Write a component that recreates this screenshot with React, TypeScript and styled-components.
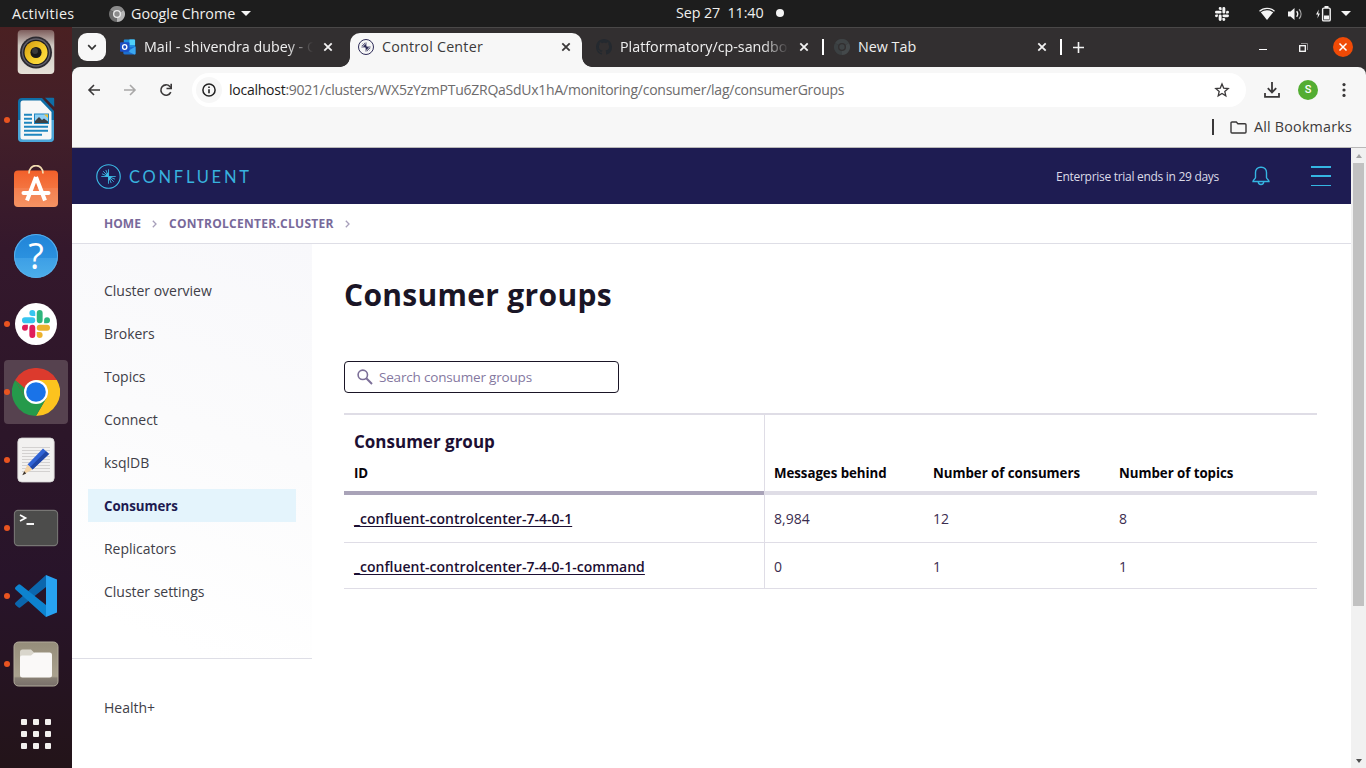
import React from 'react';
import styled, { createGlobalStyle, css } from 'styled-components';

const GlobalStyle = createGlobalStyle`
  * { box-sizing: border-box; }
  html, body { margin: 0; padding: 0; overflow: hidden; }
  body { font-family: "Open Sans", "Noto Sans", sans-serif; font-size: 14px; }
  svg { display: block; flex: none; }
`;

const Desktop = styled.div`
  width: 1366px;
  height: 768px;
  display: flex;
  flex-direction: column;
  overflow: hidden;
  background: #1d1d1d;
`;

/* ---------- GNOME top bar ---------- */

const TopBar = styled.header`
  height: 27px;
  flex: none;
  display: grid;
  grid-template-columns: 1fr auto 1fr;
  align-items: center;
  background: #1d1d1d;
  color: #f0f0ee;
  font-size: 14.3px;
  line-height: 20px;
  white-space: pre;
`;

const TopBarLeft = styled.div`
  display: flex;
  align-items: center;
  padding-left: 12px;
`;

const Activities = styled.span`
  width: 97px;
  letter-spacing: 0.36px;
`;

const AppMenu = styled.div`
  display: flex;
  align-items: center;
  gap: 6px;
`;

const Clock = styled.div`
  display: flex;
  align-items: center;
  gap: 12px;
  padding: 0 0 1px 93px;
  letter-spacing: -0.08px;
  width: 200px;
`;

const NotificationDot = styled.i`
  width: 8px;
  height: 8px;
  flex: none;
  border-radius: 50%;
  background: #f4f4f4;
`;

const Tray = styled.div`
  display: flex;
  justify-content: flex-end;
  align-items: center;
  padding-right: 15px;
`;

const TrayItem = styled.span<{ $w: number }>`
  width: ${p => p.$w}px;
  flex: none;
  display: flex;
  justify-content: center;
`;

const Caret = styled.i`
  border: 5px solid transparent;
  border-top-color: #f4f4f4;
  border-bottom: 0;
`;

/* ---------- Dock ---------- */

const Workspace = styled.div`
  flex: 1;
  min-height: 0;
  display: flex;
`;

const Dock = styled.nav`
  width: 72px;
  flex: none;
  overflow: hidden;
  background: linear-gradient(180deg, #4a2022 0%, #421f29 14%, #34182c 30%, #2c1629 55%, #28142a 75%, #231419 100%);
`;

const DockList = styled.div`
  margin-top: -9px;
  display: flex;
  flex-direction: column;
`;

const DockItem = styled.div<{ $running?: boolean }>`
  height: 68px;
  padding: 2px 4px;
  display: flex;

  &::before {
    content: '';
    width: 6px;
    height: 6px;
    margin-right: -6px;
    align-self: center;
    border-radius: 50%;
    z-index: 1;
    background: ${p => (p.$running ? '#e95420' : 'transparent')};
  }
`;

const DockTile = styled.div<{ $focused?: boolean }>`
  width: 64px;
  height: 64px;
  display: flex;
  align-items: center;
  justify-content: center;
  border-radius: 4px;
  background: ${p => (p.$focused ? '#56424f' : 'transparent')};
`;

const AppGrid = styled.div`
  height: 72px;
  display: grid;
  grid-template-columns: repeat(3, 6px);
  grid-auto-rows: 6px;
  gap: 6px;
  place-content: center;

  i { border-radius: 1px; background: #f2f0ee; }
`;

/* ---------- Browser chrome ---------- */

const Browser = styled.main`
  flex: 1;
  min-width: 0;
  display: flex;
  flex-direction: column;
  background: #322f30;
`;

const TabStrip = styled.div`
  height: 40px;
  flex: none;
  display: flex;
  padding: 5px 0 0 6px;
  border-top: 1px solid #4a4848;
`;

const TabSearch = styled.button`
  width: 28px;
  height: 28px;
  margin-right: 6px;
  padding: 0;
  border: 0;
  border-radius: 9px;
  display: flex;
  align-items: center;
  justify-content: center;
  background: #f7f7f7;
`;

const Tab = styled.div<{ $active?: boolean }>`
  position: relative;
  width: 232px;
  height: 34px;
  margin-right: 6px;
  padding: 0 11px 6px 8px;
  display: flex;
  align-items: center;
  color: ${p => (p.$active ? '#3c3a3b' : '#efefef')};
  font-size: 14.3px;
  ${p => p.$active && css`
    border-radius: 10px 10px 0 0;
    background: #f7f7f7;

    &::before, &::after {
      content: '';
      position: absolute;
      bottom: 0;
      width: 10px;
      height: 10px;
    }
    &::before {
      left: -10px;
      background: radial-gradient(circle at 0 0, transparent 9.5px, #f7f7f7 10.2px);
    }
    &::after {
      right: -10px;
      background: radial-gradient(circle at 100% 0, transparent 9.5px, #f7f7f7 10.2px);
    }
  `}
`;

const TabTitle = styled.span<{ $fade?: boolean; $spacing?: number }>`
  flex: 1;
  min-width: 0;
  margin: 0 10px 0 8px;
  overflow: hidden;
  white-space: nowrap;
  line-height: 20px;
  letter-spacing: ${p => p.$spacing ?? 0}px;
  ${p => p.$fade && css`
    -webkit-mask-image: linear-gradient(90deg, #000 calc(100% - 26px), transparent);
    mask-image: linear-gradient(90deg, #000 calc(100% - 26px), transparent);
  `}
`;

const TabDivider = styled.i<{ $after?: number }>`
  width: 2px;
  height: 16px;
  margin: 6px ${p => p.$after ?? 0}px 0 -4px;
  background: #fff;
`;

const WindowControls = styled.div`
  margin-left: auto;
  height: 28px;
  padding-right: 3px;
  display: flex;
  align-items: center;
`;

const WindowButton = styled.span<{ $w: number }>`
  width: ${p => p.$w}px;
  display: flex;
  justify-content: center;
`;

const NewTabButton = styled.span`
  width: 20px;
  height: 28px;
  display: flex;
  align-items: center;
  justify-content: center;
`;

const Toolbar = styled.div`
  height: 46px;
  flex: none;
  display: flex;
  align-items: center;
  padding-left: 4px;
  border-radius: 8px 8px 0 0;
  background: #f7f7f7;
`;

const ToolButton = styled.span`
  width: 36px;
  display: flex;
  justify-content: center;
`;

const AddressBar = styled.div`
  width: 1054px;
  height: 34px;
  margin: 0 8px;
  padding: 0 16px 0 4px;
  display: flex;
  align-items: center;
  border-radius: 17px;
  background: #fff;
`;

const SiteInfo = styled.span`
  width: 26px;
  height: 26px;
  margin-right: 7px;
  display: flex;
  align-items: center;
  justify-content: center;
  border-radius: 50%;
  background: #f7f7f7;
`;

const Url = styled.span`
  flex: 1;
  color: #6d6b6c;
  font-size: 14px;
  line-height: 20px;
  letter-spacing: -0.25px;
  b { font-weight: 400; color: #1c1b1b; }
`;

const Avatar = styled.span`
  width: 20px;
  height: 20px;
  border-radius: 50%;
  display: flex;
  align-items: center;
  justify-content: center;
  background: #53ad32;
  color: #fff;
  font: 500 11px/20px Roboto, sans-serif;
`;

const BookmarksBar = styled.div`
  height: 35px;
  flex: none;
  padding: 0 14px 6px 0;
  display: flex;
  align-items: center;
  justify-content: flex-end;
  background: #f7f7f7;
  border-bottom: 1px solid #b9b8b8;
  color: #3c3a3b;
  font-size: 14.3px;
  line-height: 20px;
  letter-spacing: 0.21px;
  svg { margin: 0 7px 0 16px; }
`;

const BookmarkDivider = styled.i`
  width: 2px;
  height: 16px;
  background: #3a3839;
`;

/* ---------- Page ---------- */

const Viewport = styled.div`
  flex: 1;
  min-height: 0;
  display: flex;
  background: #fff;
`;

const Page = styled.div`
  flex: 1;
  min-width: 0;
  display: flex;
  flex-direction: column;
`;

const Scrollbar = styled.div`
  width: 15px;
  flex: none;
  display: flex;
  flex-direction: column;
  align-items: center;
  background: #f1f1f1;
`;

const ScrollArrow = styled.span<{ $down?: boolean }>`
  height: 15px;
  display: flex;
  align-items: center;
  margin-top: ${p => (p.$down ? 'auto' : '0')};
  i {
    border: 3.5px solid transparent;
    ${p => (p.$down
      ? 'border-top: 4px solid #505050; border-bottom: 0;'
      : 'border-bottom: 4px solid #a3a3a3; border-top: 0;')}
  }
`;

const ScrollThumb = styled.div`
  width: 11px;
  height: 443px;
  background: #c1c1c1;
`;

const Banner = styled.header`
  height: 56px;
  flex: none;
  padding: 0 20px 0 24px;
  display: flex;
  align-items: center;
  background: #1e1c52;
`;

const Wordmark = styled.span`
  margin: 1px 0 0 8px;
  color: #38b2de;
  font: 400 16.5px/24px Lato, sans-serif;
  letter-spacing: 2.75px;
`;

const TrialNotice = styled.span`
  margin: 0 32px 0 auto;
  color: #dcdbe8;
  font-size: 12px;
  letter-spacing: -0.29px;
`;

const MenuIcon = styled.span`
  width: 20px;
  height: 20px;
  margin-left: 40px;
  display: flex;
  flex-direction: column;
  justify-content: space-between;
  i { height: 1.5px; background: #35b5e2; }
`;

const Breadcrumbs = styled.nav`
  height: 40px;
  flex: none;
  padding: 0 0 1px 32px;
  display: flex;
  align-items: center;
  border-bottom: 1px solid #dedee6;
  color: #78699a;
  font-size: 12px;
  font-weight: 700;
  svg { margin: 1px 12px 0 11px; }
`;

const Crumb = styled.span<{ $spacing: number }>`
  letter-spacing: ${p => p.$spacing}px;
`;

const Body = styled.div`
  flex: 1;
  min-height: 0;
  display: flex;
`;

const Sidebar = styled.aside`
  width: 240px;
  flex: none;
  display: flex;
  flex-direction: column;
`;

const NavGroup = styled.div<{ $main?: boolean }>`
  display: flex;
  flex-direction: column;
  gap: 10px;
  padding: 30px 16px 0;
  ${p => p.$main && css`
    height: 415px;
    border-bottom: 1px solid #dedee6;
    background: linear-gradient(200deg, #f8f8fb 0%, #fbfbfc 45%, #fff 90%);
  `}
  ${p => !p.$main && css`padding-top: 32px;`}
`;

const NavItem = styled.a<{ $active?: boolean }>`
  height: 33px;
  padding-left: 16px;
  line-height: 33px;
  color: #403e48;
  font-size: 14px;
  font-weight: 400;
  letter-spacing: -0.02px;
  ${p => p.$active && css`
    background: #e4f4fc;
    color: #1d1a50;
    font-size: 13.3px;
    font-weight: 700;
    line-height: 34px;
    letter-spacing: -0.07px;
  `}
`;

const Content = styled.section`
  flex: 1;
  min-width: 0;
  padding: 28px 34px 0 32px;
  display: flex;
  flex-direction: column;
`;

const Title = styled.h1`
  margin: 0 0 43px;
  height: 46px;
  color: #1a1526;
  font-size: 30px;
  font-weight: 700;
  line-height: 46px;
  letter-spacing: 0.3px;
`;

const SearchBox = styled.div`
  width: 275px;
  height: 32px;
  margin-bottom: 20px;
  padding: 0 0 1px 12px;
  display: flex;
  align-items: center;
  gap: 6px;
  border: 1px solid #1a1526;
  border-radius: 4px;
  color: #84789f;
  font-size: 13.5px;
  font-weight: 400;
  letter-spacing: -0.18px;
  svg { margin-top: 1px; }
`;

const Table = styled.div`
  display: flex;
  flex-direction: column;
  border-top: 2px solid #dfdde6;
`;

const TableRow = styled.div<{ $h: number }>`
  height: ${p => p.$h}px;
  display: grid;
  grid-template-columns: 420px 159px 186px 1fr;
`;

const HeadCell = styled.div<{ $first?: boolean; $divided?: boolean }>`
  padding: 0 10px 8px;
  display: flex;
  flex-direction: column;
  justify-content: flex-end;
  border-bottom: 4px solid ${p => (p.$first ? '#a9a3b8' : '#dfdde6')};
  box-shadow: ${p => (p.$divided ? 'inset 1px 0 #dfdde6' : 'none')};
  color: #060309;
  font-size: 13.3px;
  font-weight: 700;
  line-height: 20px;
  letter-spacing: -0.05px;
`;

const GroupTitle = styled.strong`
  margin-bottom: 9px;
  color: #1c0f33;
  font-size: 17px;
  font-weight: 700;
  line-height: 24px;
  letter-spacing: 0;
`;

const Cell = styled.div<{ $divided?: boolean }>`
  padding: 1px 10px 0;
  display: flex;
  align-items: center;
  border-bottom: 1px solid #dfdde6;
  box-shadow: ${p => (p.$divided ? 'inset 1px 0 #dfdde6' : 'none')};
  color: #3b2d4f;
  font-size: 14px;
  font-weight: 400;
  letter-spacing: 0;

  ${TableRow}:nth-child(2) > & { padding: 0 10px 1px; }
`;

const GroupLink = styled.a`
  color: #1c0f33;
  font-weight: 600;
  letter-spacing: 0.03px;
  text-decoration: underline;
  text-underline-offset: 2px;
`;

/* ---------- Icons ---------- */

const CloseIcon = ({ color = '#f2f2f2' }: { color?: string }) => (
  <svg width="10" height="10" viewBox="0 0 10 10"><path d="M1.3 1.3 8.7 8.7M8.7 1.3 1.3 8.7" stroke={color} strokeWidth="1.8" /></svg>
);

const ChromeMono = ({ size, a, b, c, hub }: { size: number; a: string; b: string; c: string; hub: string }) => (
  <svg width={size} height={size} viewBox="0 0 48 48">
    <path d="M24 24 3.2 12A24 24 0 0 1 44.8 12z" fill={a} />
    <path d="M24 24 44.8 12A24 24 0 0 1 24 48z" fill={b} />
    <path d="M24 24 24 48A24 24 0 0 1 3.2 12z" fill={c} />
    <circle cx="24" cy="24" r="12" fill={hub} /><circle cx="24" cy="24" r="8" fill={a} />
  </svg>
);

const SlackMark = ({ size, colors }: { size: number; colors: string[] }) => (
  <svg width={size} height={size} viewBox="0 0 122.8 122.8">
    <path fill={colors[0]} d="M25.8 77.6a12.9 12.9 0 1 1-12.9-12.9h12.9zM32.3 77.6a12.9 12.9 0 0 1 25.8 0v32.3a12.9 12.9 0 1 1-25.8 0z" />
    <path fill={colors[1]} d="M45.2 25.8a12.9 12.9 0 1 1 12.9-12.9v12.9zM45.2 32.3a12.9 12.9 0 0 1 0 25.8H12.9a12.9 12.9 0 1 1 0-25.8z" />
    <path fill={colors[2]} d="M97 45.2a12.9 12.9 0 1 1 12.9 12.9H97zM90.5 45.2a12.9 12.9 0 0 1-25.8 0V12.9a12.9 12.9 0 1 1 25.8 0z" />
    <path fill={colors[3]} d="M77.6 97a12.9 12.9 0 1 1-12.9 12.9V97zM77.6 90.5a12.9 12.9 0 0 1 0-25.8h32.3a12.9 12.9 0 1 1 0 25.8z" />
  </svg>
);

const WifiIcon = () => (
  <svg width="16" height="14" viewBox="0 0 16 14">
    <path d="M.5 4.3C4.6.3 11.4.3 15.5 4.3" fill="none" stroke="#f4f4f4" strokeWidth="1.2" />
    <path d="M1.8 5.3C5.4 2.6 10.6 2.6 14.2 5.3L8 13z" fill="#f4f4f4" />
  </svg>
);

const VolumeIcon = () => (
  <svg width="16" height="14" viewBox="0 0 16 14">
    <path d="M1 4.5h2.6L7.5 1v12L3.6 9.5H1z" fill="#f4f4f4" />
    <path d="M9.7 4.2c1.3 1.7 1.3 3.9 0 5.6" fill="none" stroke="#f4f4f4" strokeWidth="1.3" />
    <path d="M12.1 2.2c2.5 2.8 2.5 6.8 0 9.6" fill="none" stroke="#a8a8a8" strokeWidth="1.3" />
  </svg>
);

const BatteryIcon = () => (
  <svg width="16" height="16" viewBox="0 0 16 16">
    <path d="M3.8 3.5 1 8.6h2l-.6 4L5 7.5H3.2z" fill="#f4f4f4" />
    <rect x="7.6" y="2.1" width="7.6" height="12.8" rx="1.2" fill="none" stroke="#f4f4f4" strokeWidth="1.4" />
    <path d="M9.5 0h4v2h-4zM9 9.6h5v4H9z" fill="#f4f4f4" />
  </svg>
);

const OutlookIcon = () => (
  <svg width="16" height="16" viewBox="0 0 17 16">
    <rect x="4" y="0" width="12" height="13" rx="1" fill="#1f8fe0" />
    <path d="M10 0h5a1 1 0 0 1 1 1v5h-6z" fill="#4fd0f8" />
    <path d="M3.500 9 16.500 7.500V15a1 1 0 0 1-1 1H5a1.500 1.500 0 0 1-1.500-1.500z" fill="#1b6fd0" />
    <path d="M8 12.500 16.500 7.500V15a1 1 0 0 1-1 1z" fill="#3ba8f0" />
    <rect x="0" y="3" width="10" height="10" rx="1" fill="#1c4fc4" />
    <ellipse cx="5" cy="8" rx="2.300" ry="2.500" fill="none" stroke="#fff" strokeWidth="1.400" />
  </svg>
);

const ConfluentMark = ({ size, color, stroke }: { size: number; color: string; stroke: number }) => (
  <svg width={size} height={size} viewBox="0 0 26 26" fill="none" stroke={color}>
    <circle cx="13" cy="13" r="12.200" strokeWidth={stroke} />
    <path d="M13 13V5.500M13 13 10.200 6.200M13 13 7.500 7.500M13 13 6.200 10.200M13 13H5.500M13 13v7.500M13 13l2.800 6.800M13 13l5.500 5.500M13 13l6.800 2.800M13 13h7.500" strokeWidth={stroke * 0.75} />
    <path d="M13 13 10.500 10.500 13 8.500zM13 13l2.500 2.500L13 17.500zM13 13h4l-2 2zM13 13H9l2-2z" fill={color} stroke="none" />
  </svg>
);

const GithubIcon = () => (
  <svg width="16" height="16" viewBox="0 0 16 16">
    <path fill="#24292f" d="M8 0C3.580 0 0 3.580 0 8c0 3.540 2.290 6.530 5.470 7.590.4.070.55-.17.55-.38 0-.19-.01-.82-.01-1.490-2.010.37-2.530-.49-2.690-.94-.09-.23-.48-.94-.82-1.130-.28-.15-.68-.52-.01-.53.63-.01 1.080.58 1.230.82.72 1.210 1.870.87 2.330.66.070-.52.28-.87.51-1.070-1.780-.2-3.640-.89-3.640-3.950 0-.87.31-1.590.82-2.150-.08-.2-.36-1.020.08-2.120 0 0 .67-.21 2.200.82.64-.18 1.320-.27 2-.27s1.360.09 2 .27c1.530-1.040 2.200-.82 2.200-.82.44 1.100.16 1.920.08 2.120.51.56.82 1.270.82 2.150 0 3.070-1.870 3.750-3.650 3.950.29.25.54.73.54 1.480 0 1.070-.01 1.930-.01 2.200 0 .21.15.46.55.38A8.010 8.010 0 0 0 16 8c0-4.420-3.580-8-8-8z" />
  </svg>
);

const SpeakerApp = () => (
  <svg width="38" height="46" viewBox="0 0 38 46">
    <defs>
      <linearGradient id="spk" x2="0" y2="1"><stop stopColor="#7d5d5c" /><stop offset=".35" stopColor="#cfc9c2" /><stop offset="1" stopColor="#e6e1d8" /></linearGradient>
      <linearGradient id="cone" x2="1" y2="1"><stop stopColor="#d39a10" /><stop offset=".6" stopColor="#f6cf2d" /><stop offset="1" stopColor="#ffe14d" /></linearGradient>
    </defs>
    <rect x=".7" y="1" width="36.600" height="44" rx="4" fill="url(#spk)" />
    <circle cx="19" cy="23.500" r="16" fill="#2c2a30" /><circle cx="19" cy="23.500" r="14.200" fill="#62606a" />
    <circle cx="19" cy="23.500" r="12.800" fill="#1d1c20" /><circle cx="19" cy="23.500" r="11.500" fill="url(#cone)" />
    <circle cx="19" cy="23.500" r="5.600" fill="#19191a" /><circle cx="18" cy="22" r="3" fill="#3a3a3a" />
  </svg>
);

const WriterApp = () => (
  <svg width="38" height="46" viewBox="0 0 38 46">
    <path d="M5 1h20l12 13v27a4 4 0 0 1-4 4H5a4 4 0 0 1-4-4V5a4 4 0 0 1 4-4z" fill="#0f6ea6" />
    <path d="M1 23h36v18a4 4 0 0 1-4 4H5a4 4 0 0 1-4-4z" fill="#4ba6d8" />
    <path d="M28 .8h8.200a1 1 0 0 1 1 1V10z" fill="#0f6ea6" />
    <path d="M6 3.500h17.500L34.500 15v25a2.500 2.500 0 0 1-2.500 2.500H6A2.500 2.500 0 0 1 3.500 40V6A2.500 2.500 0 0 1 6 3.500z" fill="#f7f7f7" />
    <path d="M7 17.800h8M7 21.800h8M7 25.800h8M7 29.800h24M7 33.800h24M7 37.800h18" stroke="#1f86bf" strokeWidth="1.900" />
    <rect x="17.500" y="17" width="14" height="9.500" fill="#8fd0f4" stroke="#1f86bf" />
    <path d="M18 26v-2l4-4 3 3 2-1.500 4 3V26z" fill="#3c4043" /><path d="m27 17.500 4 0v3.500z" fill="#f0c030" />
  </svg>
);

const SoftwareApp = () => (
  <svg width="46" height="46" viewBox="0 3 46 46">
    <defs><linearGradient id="bag" x2="0" y2="1"><stop stopColor="#f2602a" /><stop offset="1" stopColor="#f58a57" /></linearGradient></defs>
    <rect x="1" y="8.500" width="44" height="36.500" rx="4" fill="url(#bag)" />
    <path d="M1 26h44v15a4 4 0 0 1-4 4H5a4 4 0 0 1-4-4z" fill="#fff" opacity=".08" />
    <path d="M16 11.500c0-10.500 14-10.500 14 0" fill="none" stroke="#f2dcb0" strokeWidth="1.800" />
    <path d="M23 15 14 38.500M23 15l9 23.500" stroke="#fff" strokeWidth="4" fill="none" />
    <path d="M10.500 31h25" stroke="#fff" strokeWidth="4" strokeLinecap="round" />
  </svg>
);

const HelpGlyph = styled.span`
  width: 44px;
  height: 44px;
  border-radius: 50%;
  text-align: center;
  color: #fff;
  background: linear-gradient(180deg, #2084d8, #2b91df 54%, #3d9fe6 55%, #4caeea);
  box-shadow: inset 0 0 0 1px #58aeea;
  font: 400 36px/43px "Open Sans", sans-serif;
`;

const SlackDisc = styled.span`
  width: 42px;
  height: 42px;
  border-radius: 50%;
  display: flex;
  align-items: center;
  justify-content: center;
  background: #fff;
`;

const ChromeApp = () => (
  <svg width="48" height="48" viewBox="0 0 48 48">
    <path d="M24 24 3.200 12A24 24 0 0 1 44.800 12H24z" fill="#dc3a2d" />
    <path d="M24 12H44.800A24 24 0 0 1 24 48L34.400 30z" fill="#fcc31e" />
    <path d="M34.400 30 24 48A24 24 0 0 1 3.200 12L13.600 30z" fill="#259a4b" />
    <path d="M24 12v12L13.600 30 3.200 12z" fill="#dc3a2d" /><path d="M3.200 12 13.600 30H24z" fill="#259a4b" />
    <circle cx="24" cy="24" r="12" fill="#fff" /><circle cx="24" cy="24" r="9.800" fill="#1a73e8" />
  </svg>
);

const EditorApp = () => (
  <svg width="38" height="46" viewBox="0 0 38 46">
    <rect x=".8" y="1" width="36.400" height="44" rx="4" fill="#f2f1f0" stroke="#d2d0d0" strokeWidth=".8" />
    <path d="M5 10.500h28M5 13.500h28M5 16.500h28M5 19.500h28M5 22.500h28M5 25.500h28M5 28.500h28M5 31.500h28M5 34.500h28" stroke="#cfcdcc" strokeWidth=".9" />
    <path d="M26 11.500 10.500 27.500 15.500 32.500 32 17z" fill="#2f62d4" /><path d="m29 14.300-16 16 2.500 2.300L32 17z" fill="#1f46a6" />
    <path d="M10.500 27.500 5.500 38 15.500 32.500z" fill="#f3d3a6" /><path d="M7.300 34.300 5.300 38.300 9.200 36.400z" fill="#3a3430" />
  </svg>
);

const TerminalApp = () => (
  <svg width="46" height="38" viewBox="0 0 46 38">
    <rect x="1.400" y="1.400" width="43.200" height="35.200" rx="3.600" fill="#4c4c4b" stroke="#777674" strokeWidth="1.100" />
    <path d="M7 6l5.500 3L7 12" fill="none" stroke="#fff" strokeWidth="1.700" /><path d="M13.500 15H21" stroke="#fff" strokeWidth="1.900" />
  </svg>
);

const CodeApp = () => (
  <svg width="44" height="44" viewBox="0 0 44 44">
    <path d="M1.500 28.500 32 1v12L6.500 33.200a2 2 0 0 1-2.600-.1L1.600 31a1.700 1.700 0 0 1-.1-2.500z" fill="#0b66ad" />
    <path d="M1.500 15.500 32 43V31L6.500 10.800a2 2 0 0 0-2.600.1L1.600 13a1.700 1.700 0 0 0-.1 2.500z" fill="#0d83cf" />
    <path d="M32 1 43 5.500v33L32 43z" fill="#27a2f1" />
  </svg>
);

const FilesApp = () => (
  <svg width="46" height="46" viewBox="0 0 46 46">
    <defs><linearGradient id="fil" x2="0" y2="1"><stop stopColor="#958d7a" /><stop offset=".78" stopColor="#aaa28f" /><stop offset=".82" stopColor="#877f74" /><stop offset="1" stopColor="#786f6a" /></linearGradient></defs>
    <rect x="1" y="1" width="44" height="44" rx="4.500" fill="url(#fil)" stroke="#b3ac9c" />
    <path d="M7 17v-6a2.500 2.500 0 0 1 2.500-2.500h8.500L21.500 12H36v8z" fill="#d9d6cc" />
    <path d="M7 16.500a2 2 0 0 1 2-2h9l3.500-3H36.500a2.500 2.500 0 0 1 2.500 2.500v20a2.500 2.500 0 0 1-2.500 2.500h-27A2.500 2.500 0 0 1 7 34z" fill="#faf9f8" />
  </svg>
);

const CrumbChevron = () => (
  <svg width="5" height="8" viewBox="0 0 5 8"><path d="M.8.8 4 4 .8 7.200" fill="none" stroke="#a79fba" strokeWidth="1.300" /></svg>
);

/* ---------- Data ---------- */

const dockApps = [
  { icon: <SpeakerApp /> },
  { icon: <WriterApp />, running: true },
  { icon: <SoftwareApp /> },
  { icon: <HelpGlyph>?</HelpGlyph> },
  { icon: <SlackDisc><SlackMark size={28} colors={['#e01e5a', '#36c5f0', '#2eb67d', '#ecb22e']} /></SlackDisc>, running: true },
  { icon: <ChromeApp />, running: true, focused: true },
  { icon: <EditorApp />, running: true },
  { icon: <TerminalApp />, running: true },
  { icon: <CodeApp />, running: true },
  { icon: <FilesApp />, running: true },
];

const navItems = ['Cluster overview', 'Brokers', 'Topics', 'Connect', 'ksqlDB', 'Consumers', 'Replicators', 'Cluster settings'];

const groups = [
  { id: '_confluent-controlcenter-7-4-0-1', behind: '8,984', consumers: '12', topics: '8', height: 48 },
  { id: '_confluent-controlcenter-7-4-0-1-command', behind: '0', consumers: '1', topics: '1', height: 46 },
];

export default function App() {
  return (
    <>
      <GlobalStyle />
      <Desktop>
        <TopBar>
          <TopBarLeft>
            <Activities>Activities</Activities>
            <AppMenu>
              <ChromeMono size={16} a="#8b8b8b" b="#b5b5b5" c="#6d6d6d" hub="#ececec" />
              <span>Google Chrome</span>
              <Caret />
            </AppMenu>
          </TopBarLeft>
          <Clock><span>Sep 27  11:40</span><NotificationDot /></Clock>
          <Tray>
            <TrayItem $w={54}><SlackMark size={14} colors={['#f4f4f4', '#f4f4f4', '#f4f4f4', '#f4f4f4']} /></TrayItem>
            <TrayItem $w={36}><WifiIcon /></TrayItem>
            <TrayItem $w={20}><VolumeIcon /></TrayItem>
            <TrayItem $w={36}><BatteryIcon /></TrayItem>
            <TrayItem $w={10}><Caret /></TrayItem>
          </Tray>
        </TopBar>

        <Workspace>
          <Dock>
            <DockList>
              {dockApps.map((app, i) => (
                <DockItem key={i} $running={app.running}>
                  <DockTile $focused={app.focused}>{app.icon}</DockTile>
                </DockItem>
              ))}
              <AppGrid>{Array.from({ length: 9 }, (_, i) => <i key={i} />)}</AppGrid>
            </DockList>
          </Dock>

          <Browser>
            <TabStrip>
              <TabSearch>
                <svg width="10" height="7" viewBox="0 0 10 7"><path d="M1.200 1.200 5 5l3.800-3.800" fill="none" stroke="#333" strokeWidth="1.700" /></svg>
              </TabSearch>
              <Tab><OutlookIcon /><TabTitle $fade>Mail - shivendra dubey - Outlook</TabTitle><CloseIcon /></Tab>
              <Tab $active>
                <ConfluentMark size={16} color="#2b2955" stroke={1.6} />
                <TabTitle $spacing={0.21}>Control Center</TabTitle>
                <CloseIcon color="#3a3839" />
              </Tab>
              <Tab><GithubIcon /><TabTitle $fade>Platformatory/cp-sandbox</TabTitle><CloseIcon /></Tab>
              <TabDivider $after={2} />
              <Tab><ChromeMono size={16} a="#3f4446" b="#44494b" c="#3b4042" hub="#322f30" /><TabTitle>New Tab</TabTitle><CloseIcon /></Tab>
              <TabDivider $after={6} />
              <NewTabButton>
                <svg width="11" height="11" viewBox="0 0 11 11"><path d="M5.500 0v11M0 5.500h11" stroke="#f4f4f4" strokeWidth="1.600" /></svg>
              </NewTabButton>
              <WindowControls>
                <WindowButton $w={40}><svg width="8" height="8" viewBox="0 0 8 8"><path d="M0 6.500h8" stroke="#fff" /></svg></WindowButton>
                <WindowButton $w={40}>
                  <svg width="9" height="9" viewBox="0 0 9 9"><path d="M2 .5h6.500V7" fill="none" stroke="#8d8b8c" /><rect x=".7" y="2.700" width="5.600" height="5.600" fill="none" stroke="#fff" strokeWidth="1.300" /></svg>
                </WindowButton>
                <WindowButton $w={40}>
                  <svg width="20" height="20" viewBox="0 0 20 20"><circle cx="10" cy="10" r="10" fill="#f04a06" /><path d="m6.500 6.500 7 7M13.500 6.500l-7 7" stroke="#fff" strokeWidth="1.500" /></svg>
                </WindowButton>
              </WindowControls>
            </TabStrip>

            <Toolbar>
              <ToolButton><svg width="14" height="12" viewBox="0 0 14 12"><path d="M13 6H2M7 1 2 6l5 5" fill="none" stroke="#3a3839" strokeWidth="1.600" /></svg></ToolButton>
              <ToolButton><svg width="14" height="12" viewBox="0 0 14 12"><path d="M1 6h11M7 1l5 5-5 5" fill="none" stroke="#a9a8a8" strokeWidth="1.600" /></svg></ToolButton>
              <ToolButton>
                <svg width="14" height="14" viewBox="0 0 14 14"><path d="M11.800 9.200A5.200 5.200 0 1 1 10.900 3.500L12 4.600" fill="none" stroke="#3a3839" strokeWidth="1.600" /><path d="M12.200.8v4.700H7.500" fill="none" stroke="#3a3839" strokeWidth="1.600" /></svg>
              </ToolButton>
              <AddressBar>
                <SiteInfo>
                  <svg width="14" height="14" viewBox="0 0 14 14"><circle cx="7" cy="7" r="6.100" fill="none" stroke="#222" strokeWidth="1.500" /><path d="M7 6.200v4M7 3.500v1.500" stroke="#222" strokeWidth="1.600" /></svg>
                </SiteInfo>
                <Url><b>localhost</b>:9021/clusters/WX5zYzmPTu6ZRQaSdUx1hA/monitoring/consumer/lag/consumerGroups</Url>
                <svg width="16" height="16" viewBox="0 0 16 16"><path d="m8 2 1.700 4.100 4.500.4-3.400 2.900 1 4.400L8 11.500l-3.800 2.300 1-4.400L1.800 6.500l4.500-.4z" fill="none" stroke="#3a3839" strokeWidth="1.300" /></svg>
              </AddressBar>
              <ToolButton>
                <svg width="16" height="16" viewBox="0 0 16 16"><path d="M8 0v10M3.800 6.200 8 10.400l4.200-4.200M1 11v3.900h14V11" fill="none" stroke="#3a3839" strokeWidth="1.800" /></svg>
              </ToolButton>
              <ToolButton><Avatar>S</Avatar></ToolButton>
              <ToolButton>
                <svg width="4" height="14" viewBox="0 0 4 14" fill="#3a3839"><circle cx="2" cy="1.600" r="1.600" /><circle cx="2" cy="7" r="1.600" /><circle cx="2" cy="12.400" r="1.600" /></svg>
              </ToolButton>
            </Toolbar>

            <BookmarksBar>
              <BookmarkDivider />
              <svg width="17" height="13" viewBox="0 0 17 13"><path d="M1 2a1 1 0 0 1 1-1h4.300l1.600 1.700H15a1 1 0 0 1 1 1V11a1 1 0 0 1-1 1H2a1 1 0 0 1-1-1z" fill="none" stroke="#3a3839" strokeWidth="1.400" /></svg>
              <span>All Bookmarks</span>
            </BookmarksBar>

            <Viewport>
              <Page>
                <Banner>
                  <ConfluentMark size={25} color="#3cbbe6" stroke={1.2} />
                  <Wordmark>CONFLUENT</Wordmark>
                  <TrialNotice>Enterprise trial ends in 29 days</TrialNotice>
                  <svg width="20" height="20" viewBox="0 0 20 20" fill="none" stroke="#35b5e2" strokeWidth="1.400">
                    <path d="M4.500 11.500V6.500A5 5 0 0 1 9.500 1.200h1A5 5 0 0 1 15.500 6.500v5c0 1.500 2.500 2 2.500 4H2c0-2 2.500-2.500 2.500-4z" />
                    <path d="M7.300 15.800a2.700 2.700 0 0 0 5.400 0" />
                  </svg>
                  <MenuIcon><i /><i /><i /></MenuIcon>
                </Banner>
                <Breadcrumbs>
                  <Crumb $spacing={0.06}>HOME</Crumb>
                  <CrumbChevron />
                  <Crumb $spacing={0.27}>CONTROLCENTER.CLUSTER</Crumb>
                  <CrumbChevron />
                </Breadcrumbs>
                <Body>
                  <Sidebar>
                    <NavGroup $main>
                      {navItems.map(item => <NavItem key={item} $active={item === 'Consumers'}>{item}</NavItem>)}
                    </NavGroup>
                    <NavGroup><NavItem>Health+</NavItem></NavGroup>
                  </Sidebar>
                  <Content>
                    <Title>Consumer groups</Title>
                    <SearchBox>
                      <svg width="16" height="16" viewBox="0 0 16 16" fill="none" stroke="#7c6f98"><circle cx="5.800" cy="5.800" r="4.700" strokeWidth="1.600" /><path d="m9.300 9.300 5.700 5.700" strokeWidth="2" /></svg>
                      <span>Search consumer groups</span>
                    </SearchBox>
                    <Table>
                      <TableRow $h={80}>
                        <HeadCell $first><GroupTitle>Consumer group</GroupTitle>ID</HeadCell>
                        <HeadCell $divided>Messages behind</HeadCell>
                        <HeadCell>Number of consumers</HeadCell>
                        <HeadCell>Number of topics</HeadCell>
                      </TableRow>
                      {groups.map(g => (
                        <TableRow key={g.id} $h={g.height}>
                          <Cell><GroupLink>{g.id}</GroupLink></Cell>
                          <Cell $divided>{g.behind}</Cell>
                          <Cell>{g.consumers}</Cell>
                          <Cell>{g.topics}</Cell>
                        </TableRow>
                      ))}
                    </Table>
                  </Content>
                </Body>
              </Page>
              <Scrollbar>
                <ScrollArrow><i /></ScrollArrow>
                <ScrollThumb />
                <ScrollArrow $down><i /></ScrollArrow>
              </Scrollbar>
            </Viewport>
          </Browser>
        </Workspace>
      </Desktop>
    </>
  );
}
